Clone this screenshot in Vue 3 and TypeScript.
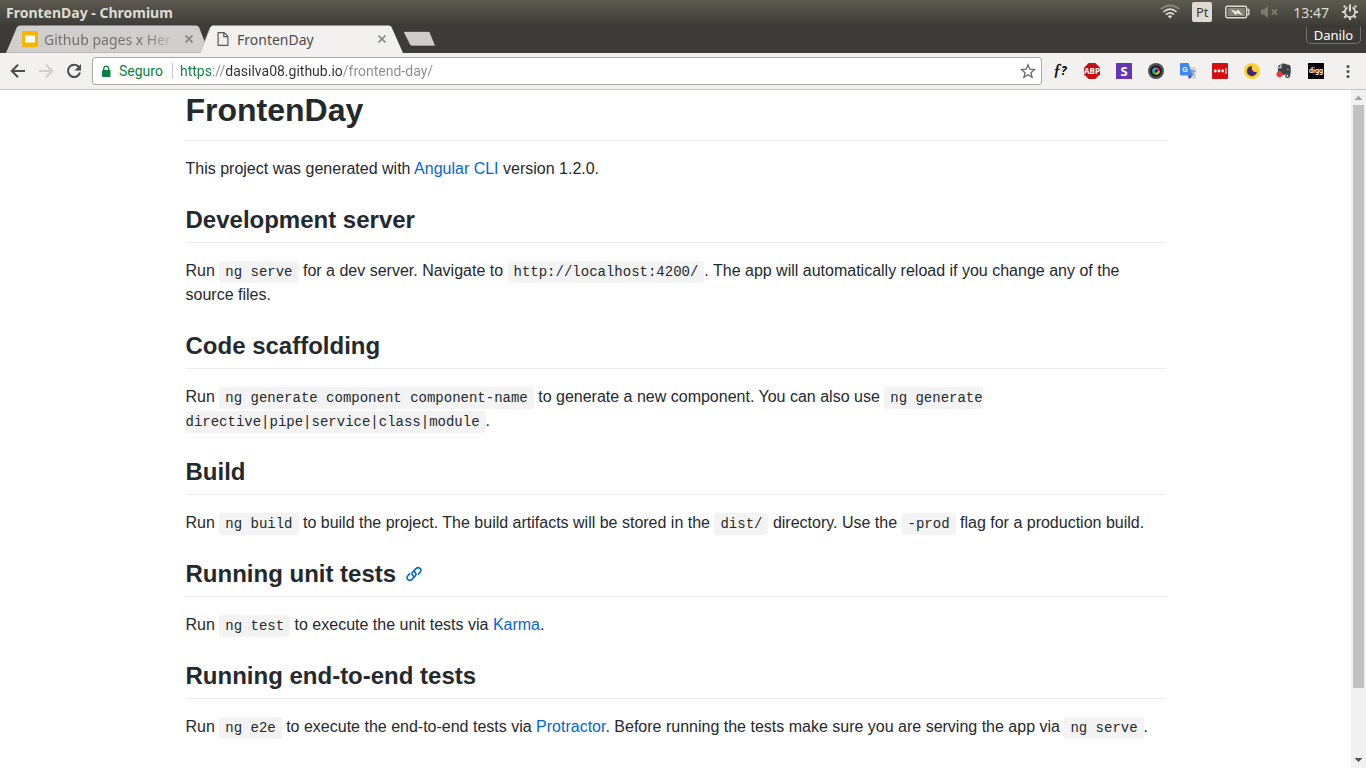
<script setup lang="ts">
import { ref } from 'vue'

interface Piece {
  kind: 'text' | 'code' | 'link'
  value: string
}
interface Section {
  id: string
  title: string
  pieces: Piece[]
  anchored?: boolean
}

const t = (value: string): Piece => ({ kind: 'text', value })
const c = (value: string): Piece => ({ kind: 'code', value })
const l = (value: string): Piece => ({ kind: 'link', value })

const address = ref('https://dasilva08.github.io/frontend-day/')

const sections: Section[] = [
  {
    id: 'development-server',
    title: 'Development server',
    pieces: [
      t('Run '), c('ng serve'), t(' for a dev server. Navigate to '), c('http://localhost:4200/'),
      t('. The app will automatically reload if you change any of the source files.'),
    ],
  },
  {
    id: 'code-scaffolding',
    title: 'Code scaffolding',
    pieces: [
      t('Run '), c('ng generate component component-name'),
      t(' to generate a new component. You can also use '),
      c('ng generate directive|pipe|service|class|module'), t('.'),
    ],
  },
  {
    id: 'build',
    title: 'Build',
    pieces: [
      t('Run '), c('ng build'), t(' to build the project. The build artifacts will be stored in the '),
      c('dist/'), t(' directory. Use the '), c('-prod'), t(' flag for a production build.'),
    ],
  },
  {
    id: 'running-unit-tests',
    title: 'Running unit tests',
    anchored: true,
    pieces: [t('Run '), c('ng test'), t(' to execute the unit tests via '), l('Karma'), t('.')],
  },
  {
    id: 'running-end-to-end-tests',
    title: 'Running end-to-end tests',
    pieces: [
      t('Run '), c('ng e2e'), t(' to execute the end-to-end tests via '), l('Protractor'),
      t('. Before running the tests make sure you are serving the app via '), c('ng serve'), t('.'),
    ],
  },
]
</script>

<template>
  <div class="screen">
    <header class="panel">
      <span class="window-title">FrontenDay - Chromium</span>
      <div class="indicators">
        <svg class="wifi" width="20" height="16" viewBox="0 0 20 16" fill="none" stroke-width="1.6">
          <path d="M0.8 5.2Q10-2.6 19.2 5.2" stroke="#8b887f" />
          <path d="M3.4 8Q10 2.4 16.6 8" stroke="#dfdbd2" />
          <path d="M6 10.6Q10 7 14 10.6" stroke="#dfdbd2" />
          <path d="M7.8 12.2Q10 10.4 12.2 12.2L10 14.6z" fill="#dfdbd2" />
        </svg>
        <span class="lang">Pt</span>
        <svg class="battery" width="25" height="14" viewBox="0 0 25 14">
          <rect x="0.8" y="1.2" width="20.8" height="11.6" rx="1.5" fill="none" stroke="#dfdbd2" stroke-width="1.4" />
          <rect x="2.6" y="3" width="17.2" height="8" fill="#85827a" />
          <path d="M22 4.5h1.8v5H22" fill="none" stroke="#dfdbd2" stroke-width="1.3" />
          <path d="M5.5 4.2l6.5 2.6.6-2.6 5.4 6.3-6.2-2.5-.8 2.3z" fill="#f2efe8" />
        </svg>
        <svg class="volume" width="19" height="14" viewBox="0 0 19 14">
          <path d="M0 4.500h3L7 1v12L3 9.500H0z" fill="#7c7a71" />
          <path d="M11 4.500l5 5m0-5l-5 5" stroke="#7c7a71" stroke-width="1.8" />
        </svg>
        <span class="clock">13:47</span>
        <svg class="gear" width="18" height="18" viewBox="0 0 18 18" fill="none" stroke="#dfdbd2">
          <path d="M6.500 4.400a5.200 5.200 0 1 0 5 0" stroke-width="1.800" />
          <path d="M9 1.500v7" stroke-width="2" />
          <path d="M4.200 4.200L2.800 2.800M13.800 4.200l1.400-1.400M3.500 9H1m13.500 0H17M5 13l-1.800 1.800M13 13l1.800 1.800M9 14.500V17" stroke-width="2.200" />
        </svg>
      </div>
    </header>

    <nav class="tab-strip" aria-label="Tabs">
      <div class="tab">
        <svg class="tab-shape" viewBox="0 0 203 28" preserveAspectRatio="none">
          <path d="M0 28L11 2Q12 .5 14 .5H190Q192 .5 193 2L203 28z" fill="#d0cfcd" />
          <path d="M0 27.500H203" stroke="#b9b7b4" />
        </svg>
        <button class="tab-label" type="button">
          <svg width="16" height="16" viewBox="0 0 16 16">
            <rect width="16" height="16" rx="1.5" fill="#f7b500" />
            <rect x="3" y="4.500" width="10" height="7" fill="#fff" />
          </svg>
          <span class="faded">Github pages x Her</span>
        </button>
        <button class="tab-close" type="button" aria-label="Close Github pages tab">
          <svg width="8" height="8" viewBox="0 0 8 8"><path d="M.5.5l7 7m0-7L.5 7.500" stroke="#858482" stroke-width="1.600" /></svg>
        </button>
      </div>
      <div class="tab active">
        <svg class="tab-shape" viewBox="0 0 203 28" preserveAspectRatio="none">
          <path d="M0 28L10.500 2Q11.500.5 13 .5H189Q190.500.5 191.500 2L203 28z" fill="#f2f1f0" />
          <path d="M0 28L10.500 2" stroke="#b9b7b4" stroke-width=".8" />
        </svg>
        <button class="tab-label" type="button">
          <svg width="16" height="16" viewBox="0 0 16 16" fill="none" stroke="#5a5a5a" stroke-width="1.200">
            <path d="M3.100 1.600h6L12.900 5.400v9H3.100zM8.800 1.800v3.900h3.900" />
          </svg>
          <span>FrontenDay</span>
        </button>
        <button class="tab-close" type="button" aria-label="Close FrontenDay tab">
          <svg width="8" height="8" viewBox="0 0 8 8"><path d="M.5.5l7 7m0-7L.5 7.500" stroke="#8a8988" stroke-width="1.600" /></svg>
        </button>
      </div>
      <button class="new-tab" type="button" aria-label="New tab">
        <svg width="33" height="16" viewBox="0 0 33 16"><path d="M1.500.5H25Q26.500.5 27 1.500L32.500 15H9.500Q7.500 15 7 14L.7 1.500Q.5.5 1.500.5z" fill="#cecdcb" stroke="#302f2c" stroke-width=".6" /></svg>
      </button>
      <button class="profile" type="button">Danilo</button>
    </nav>

    <div class="toolbar">
      <button class="nav-button" type="button" aria-label="Back">
        <svg width="16" height="16" viewBox="0 0 16 16" fill="none" stroke="#4c4c4c" stroke-width="2"><path d="M15 8H2.500M8 1.800L1.800 8 8 14.200" /></svg>
      </button>
      <button class="nav-button" type="button" aria-label="Forward">
        <svg width="16" height="16" viewBox="0 0 16 16" fill="none" stroke="#cfcecd" stroke-width="2"><path d="M1 8h12.500M8 1.800L14.200 8 8 14.200" /></svg>
      </button>
      <button class="nav-button" type="button" aria-label="Reload">
        <svg width="16" height="16" viewBox="0 0 16 16" fill="none" stroke="#4c4c4c" stroke-width="2"><path d="M13 4.200A6.100 6.100 0 1 0 14 9.500" /><path d="M15 1v6.500H8.500z" fill="#4c4c4c" stroke="none" /></svg>
      </button>
      <div class="omnibox">
        <svg width="10" height="13" viewBox="0 0 10 13">
          <rect x="1" y="5" width="8.500" height="7" rx=".8" fill="#0b8043" />
          <path d="M2.800 5.500V3.500a2.400 2.400 0 0 1 4.800 0v2" fill="none" stroke="#0b8043" stroke-width="1.300" />
        </svg>
        <span class="secure">Seguro</span>
        <input v-model="address" class="address" type="text" aria-label="Address" spellcheck="false" />
        <button class="star" type="button" aria-label="Bookmark this page">
          <svg width="16" height="16" viewBox="0 0 16 16" fill="none" stroke="#6b6b6b" stroke-width="1.300"><path d="M8 1.800l1.800 4.400 4.800.4-3.700 3.100 1.200 4.600L8 11.800l-4.100 2.500 1.200-4.600L1.400 6.600l4.800-.4z" /></svg>
        </button>
      </div>
      <div class="extensions">
        <button type="button" aria-label="Font finder">
          <svg class="roomy" width="18" height="18" viewBox="0 0 18 18"><text x="2" y="13" class="serif-glyph">ƒ</text><text x="10" y="13" class="question-glyph">?</text></svg>
        </button>
        <button type="button" aria-label="Adblock Plus">
          <svg width="18" height="18" viewBox="0 0 18 18"><path d="M5.700 1h6.600L17 5.700v6.600L12.300 17H5.700L1 12.300V5.700z" fill="#c70d12" /><text x="9" y="12" class="abp-glyph">ABP</text></svg>
        </button>
        <button type="button" aria-label="Stylish">
          <svg width="18" height="18" viewBox="0 0 18 18"><rect x="1" y="1" width="16" height="16" fill="#6236b4" /><text x="9" y="13.500" class="s-glyph">S</text></svg>
        </button>
        <button type="button" aria-label="Camera">
          <svg width="18" height="18" viewBox="0 0 18 18">
            <circle cx="9" cy="9" r="8" fill="#4b5055" /><circle cx="9" cy="9" r="5.600" fill="#11151a" />
            <path d="M9 9L5.200 9A3.800 3.800 0 0 1 9 5.200z" fill="#1bb1c9" /><path d="M9 9V5.200A3.800 3.800 0 0 1 12.800 9z" fill="#d9307c" /><path d="M9 9h3.800A3.800 3.800 0 0 1 9 12.800z" fill="#dccf2e" /><path d="M9 9v3.800A3.800 3.800 0 0 1 5.200 9z" fill="#2eb85c" />
            <circle cx="9.300" cy="9" r="1.500" fill="#10161c" />
          </svg>
        </button>
        <button type="button" aria-label="Translate">
          <svg width="18" height="18" viewBox="0 0 18 18">
            <rect x="8" y="5" width="9" height="12" rx="1" fill="#d9d9d9" />
            <path d="M10 9h6.500M13 7.500V9m2.200 0q-.8 3-3.200 4.800M12.500 10.500q1 2 3 3.300" stroke="#66879d" stroke-width="1" fill="none" />
            <path d="M2 1h7.500l4 12.500H2a1 1 0 0 1-1-1V2a1 1 0 0 1 1-1z" fill="#4285f4" /><path d="M9 13.500h4.500L10.500 17z" fill="#2850b8" />
            <text x="6" y="10" class="g-glyph">G</text>
          </svg>
        </button>
        <button type="button" aria-label="Password manager">
          <svg width="18" height="18" viewBox="0 0 18 18"><rect x="1" y="1" width="16" height="16" rx="1" fill="#d40f12" /><g fill="#fff"><circle cx="4.300" cy="9" r="1.400" /><circle cx="8" cy="9" r="1.400" /><circle cx="11.700" cy="9" r="1.400" /><path d="M14.500 6h1v6h-1z" /></g></svg>
        </button>
        <button type="button" aria-label="Dark mode">
          <svg width="18" height="18" viewBox="0 0 18 18"><circle cx="9" cy="9" r="8" fill="#fdd12f" /><path d="M9.200 4A5.100 5.100 0 1 0 14 9.800 4 4 0 0 1 9.200 4z" fill="#40286a" /></svg>
        </button>
        <button type="button" aria-label="Web clipper">
          <svg width="18" height="18" viewBox="0 0 18 18">
            <path d="M6.500 1.800q3-1 4.500.4l3.400.7q1 .3 1.200 2 .5 4.600-.5 9.100-.5 2-2.600 2-2.500 0-2.500-2 0-2 2.300-2v1.300q-1 0-1 .8t1.200.6q.8-.2.700-2-2.200.3-2.700-1-.5 1.500-2 1.300Q3 12.600 2.600 6.200h3q.9 0 .9-1z" fill="#3b4347" />
            <path d="M2.500 5.200L5.500 2v3.200z" fill="#3b4347" /><path d="M12 7q1.500-.4 2 .8l-2-.3z" fill="#f2f1f0" />
            <circle cx="4.500" cy="12.300" r="3" fill="#f4343e" />
          </svg>
        </button>
        <button type="button" aria-label="Digg">
          <svg width="18" height="18" viewBox="0 0 18 18"><rect x="1" y="1" width="16" height="16" fill="#000" /><text x="9" y="11" class="digg-glyph">digg</text></svg>
        </button>
        <button type="button" aria-label="Menu">
          <svg width="18" height="18" viewBox="0 0 18 18" fill="#4c4c4c"><circle cx="9" cy="4.500" r="1.500" /><circle cx="9" cy="9.500" r="1.500" /><circle cx="9" cy="14.500" r="1.500" /></svg>
        </button>
      </div>
    </div>

    <div class="viewport">
      <main class="page">
        <article class="markdown">
          <h1>FrontenDay</h1>
          <p>This project was generated with <a href="#angular-cli">Angular CLI</a> version 1.2.0.</p>
          <section v-for="section in sections" :key="section.id">
            <h2 :id="section.id">{{ section.title }}<a v-if="section.anchored" class="anchor" :href="'#' + section.id" aria-label="Link to this section"><svg width="16" height="16" viewBox="0 0 16 16" fill="none" stroke="#0366d6" stroke-width="1.600" stroke-linecap="round"><path d="M7.600 10.200C5.800 9.200 5.600 7.300 6.800 6L10 2.600C12.600 0 16.600 3.300 14.300 6.100L12.300 8.300" /><path d="M8.400 5.800C10.200 6.800 10.400 8.700 9.200 10L6 13.400C3.400 16-.6 12.700 1.700 9.900L3.700 7.700" /></svg></a></h2>
            <p><template v-for="(piece, i) in section.pieces" :key="i"><code v-if="piece.kind === 'code'">{{ piece.value }}</code><a v-else-if="piece.kind === 'link'" :href="'#' + piece.value.toLowerCase()">{{ piece.value }}</a><template v-else>{{ piece.value }}</template></template></p>
          </section>
        </article>
      </main>
      <div class="scrollbar" aria-hidden="true">
        <svg width="15" height="15" viewBox="0 0 15 15"><path d="M7.500 5.500L11.500 10h-8z" fill="#a3a3a3" /></svg>
        <div class="track"><div class="thumb"></div></div>
        <svg width="15" height="15" viewBox="0 0 15 15"><path d="M7.500 9L11.500 5h-8z" fill="#505050" /></svg>
      </div>
    </div>
  </div>
</template>

<style>
body {
  margin: 0;
}
</style>

<style scoped>
.screen {
  display: flex;
  flex-direction: column;
  height: 100vh;
  overflow: hidden;
  background: #fff;
  font-family: "Noto Sans", "Open Sans", sans-serif;
}
button {
  padding: 0;
  border: 0;
  background: none;
  font: inherit;
  color: inherit;
}
svg {
  display: block;
  flex: none;
}
.panel {
  display: flex;
  align-items: center;
  justify-content: space-between;
  height: 24px;
  padding: 0 7px 0 6px;
  background: linear-gradient(#5c5a50, #3f3e39);
  color: #dfdbd2;
}
.window-title {
  font-size: 14px;
  font-weight: 700;
}
.indicators {
  display: flex;
  align-items: center;
}
.lang {
  width: 20px;
  height: 20px;
  margin-left: 12px;
  border-radius: 2px;
  background: #dfdbd2;
  color: #3c3b37;
  font-size: 13px;
  line-height: 20px;
  text-align: center;
}
.battery {
  margin-left: 13px;
}
.volume {
  margin-left: 11px;
}
.clock {
  margin: 0 12px 0 13px;
  font-size: 14px;
}
.tab-strip {
  display: flex;
  height: 29px;
  padding-left: 6px;
  background: #3c3b37;
}
.tab {
  position: relative;
  display: flex;
  align-items: center;
  width: 203px;
  height: 28px;
  margin-top: 1px;
  color: #72716f;
}
.tab.active {
  margin-left: -9px;
  color: #4c4c4c;
}
.tab-shape {
  position: absolute;
  inset: 0;
  width: 100%;
  height: 100%;
}
.tab-label {
  position: relative;
  display: flex;
  flex: 1;
  align-items: center;
  gap: 6px;
  min-width: 0;
  padding-left: 16px;
  font-size: 14px;
  text-align: left;
  white-space: nowrap;
}
.faded {
  flex: 1;
  min-width: 0;
  mask-image: linear-gradient(90deg, #000 75%, transparent);
}
.tab.active .tab-label {
  padding-left: 15px;
}
.tab-close {
  position: relative;
  margin: 0 16px 0 8px;
}
.tab.active .tab-close {
  margin-right: 17px;
}
.new-tab {
  align-self: center;
}
.profile {
  align-self: flex-start;
  width: 55px;
  height: 18px;
  margin: 2px 5px 0 auto;
  border: 1px solid #74726b;
  border-top-color: #34332f;
  border-radius: 2px 2px 5px 5px;
  color: #fff;
  font-size: 13px;
  line-height: 16px;
}
.toolbar {
  display: flex;
  align-items: center;
  height: 36px;
  padding: 0 9px 0 10px;
  border-bottom: 1px solid #c8c7c6;
  background: #f2f1f0;
}
.nav-button {
  margin-right: 12px;
}
.nav-button:nth-child(3) {
  margin-right: 10px;
}
.omnibox {
  display: flex;
  flex: 1;
  align-items: center;
  min-width: 0;
  height: 26px;
  padding: 0 5px 0 8px;
  border: 1px solid #a9a8a7;
  border-radius: 3px;
  background: #fff;
  font-family: Roboto, "Noto Sans", sans-serif;
  font-size: 14px;
}
.secure {
  margin: 0 7px 0 8px;
  padding-right: 9px;
  border-right: 1px solid #c4c4c4;
  color: #0b8043;
  line-height: 16px;
}
.address {
  flex: 1;
  min-width: 0;
  padding: 0;
  border: 0;
  outline: 0;
  background: linear-gradient(90deg, #0b8043 0 32px, #8c8c8c 32px 46px, #303030 46px 163px, #8c8c8c 163px);
  background-clip: text;
  color: transparent;
  font: inherit;
}
.extensions {
  display: flex;
  gap: 14px;
  margin-left: 9px;
}
.roomy {
  overflow: visible;
}
.serif-glyph {
  font: italic 400 17px "Liberation Serif", serif;
  stroke: #000;
  stroke-width: 0.4px;
}
.question-glyph {
  font: italic 700 12px "Open Sans", sans-serif;
}
.abp-glyph {
  fill: #fff;
  font: 700 8px "Open Sans", sans-serif;
  text-anchor: middle;
}
.s-glyph {
  fill: #fff;
  font: 700 13px "Noto Sans", sans-serif;
  text-anchor: middle;
}
.g-glyph {
  fill: #fff;
  font: 700 7px "Liberation Sans", sans-serif;
  text-anchor: middle;
}
.digg-glyph {
  fill: #fff;
  font: 700 7px Roboto, sans-serif;
  text-anchor: middle;
}
.viewport {
  display: flex;
  flex: 1;
  min-height: 0;
}
.page {
  flex: 1;
  overflow: hidden;
}
.markdown {
  max-width: 980px;
  margin: 0 auto;
  color: #24292e;
  font-family: "Liberation Sans", Arial, sans-serif;
  font-size: 16px;
  line-height: 24px;
}
h1,
h2 {
  margin: 24px 0 16px;
  border-bottom: 1px solid #eaecef;
  font-weight: 700;
}
h1 {
  margin-top: 0;
  padding-bottom: 10px;
  font-size: 32px;
  line-height: 40px;
}
h2 {
  padding-bottom: 7px;
  font-size: 24px;
  line-height: 30px;
}
p {
  margin: 0 0 16px;
}
a {
  color: #0366d6;
  text-decoration: none;
}
.anchor {
  display: inline-block;
  margin-left: 10px;
  line-height: 16px;
}
code {
  padding: 3px 6px;
  border-radius: 3px;
  background: #f3f3f3;
  font-family: "Liberation Mono", monospace;
  font-size: 14px;
  line-height: 20px;
}
.scrollbar {
  display: flex;
  flex-direction: column;
  width: 15px;
  background: #f1f1f1;
}
.track {
  flex: 1;
  padding: 0 2px;
}
.thumb {
  height: 90%;
  background: #c1c1c1;
}
</style>
